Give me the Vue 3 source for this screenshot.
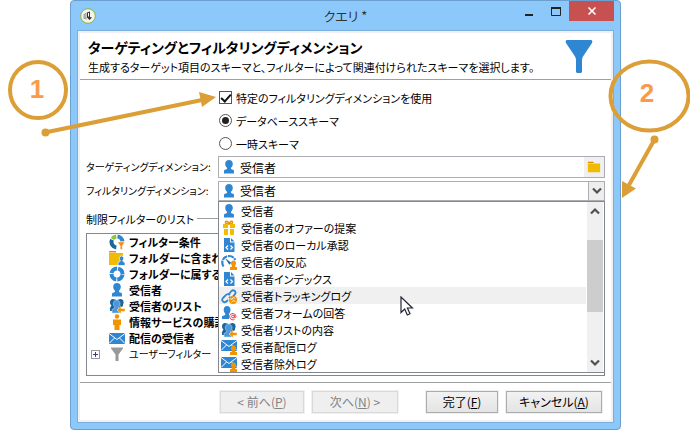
<script setup>
import { ref } from 'vue'

const useSpecific = ref(true)
const schema = ref('database')
const target = ref('受信者')
const filterDimension = ref('受信者')

const options = [
  { icon: 'person', label: '受信者' },
  { icon: 'gift', label: '受信者のオファーの提案' },
  { icon: 'code', label: '受信者のローカル承認' },
  { icon: 'gauge', label: '受信者の反応' },
  { icon: 'code', label: '受信者インデックス' },
  { icon: 'link', label: '受信者トラッキングログ', active: true },
  { icon: 'personat', label: '受信者フォームの回答' },
  { icon: 'group', label: '受信者リストの内容' },
  { icon: 'mailperson', label: '受信者配信ログ' },
  { icon: 'mailperson', label: '受信者除外ログ' },
]

const filters = [
  { icon: 'ringfilter', label: 'フィルター条件' },
  { icon: 'folderperson', label: 'フォルダーに含まれ' },
  { icon: 'ring', label: 'フォルダーに属する' },
  { icon: 'person', label: '受信者' },
  { icon: 'group', label: '受信者のリスト' },
  { icon: 'figure', label: '情報サービスの購読' },
  { icon: 'mail', label: '配信の受信者' },
  { icon: 'funnel', label: 'ユーザーフィルター', folder: true },
]
</script>

<template>
  <div class="page">
    <svg class="defs" width="0" height="0" aria-hidden="true">
      <symbol id="person" viewBox="0 0 16 16">
        <path fill="#2f86d2" d="M8 1C5.700 1 4.200 2.600 4.200 4.800c0 1.700.7 3 1.800 3.900v1.200L3.400 11C3 11.400 3 12 3 14.500h10c0-2.500 0-3.100-.4-3.500L10 9.900V8.700c1.100-.9 1.800-2.200 1.800-3.900C11.800 2.600 10.300 1 8 1z" />
      </symbol>
      <symbol id="gift" viewBox="0 0 16 16">
        <path fill="none" stroke="#ef8c00" stroke-width="1.500" d="M8 4C6 4 4 3.500 4.500 2S7.500 1.500 8 4c.5-2.500 3-3.500 3.500-2S10 4 8 4z" />
        <path fill="#f2bd00" d="M2 4h5v4H2zM9 4h5v4H9zM3 9h4v6H3zM9 9h4v6H9z" />
      </symbol>
      <symbol id="code" viewBox="0 0 16 16">
        <path fill="#2f86d2" d="M3 1h6v4.500h4.500V15H3z" />
        <path fill="#2f86d2" d="M10 1l3.500 3.500H10z" />
        <path fill="none" stroke="#fff" stroke-width="1.200" d="M7 8.500l-2 2 2 2M9.500 8.500l2 2-2 2" />
      </symbol>
      <symbol id="mini" viewBox="0 0 16 16">
        <path d="M12.500 6.500a2.700 2.700 0 0 0-1.500 4.900v1.100L9 13.300V16h7v-2.700l-2-.8v-1.100a2.700 2.700 0 0 0-1.500-4.900z" />
      </symbol>
      <symbol id="gauge" viewBox="0 0 16 16">
        <path fill="none" stroke="#2f86d2" stroke-width="2.200" stroke-dasharray="6 .8" d="M2.500 12.500C-.5 7.500 2.500 2 8 2c3 0 5 1.500 6.300 4" />
        <path fill="#1f69aa" d="M4 4l6.200 4.800-1.900 1.900z" />
        <use href="#mini" fill="#f29400" />
      </symbol>
      <symbol id="link" viewBox="0 0 16 16">
        <g fill="none" stroke="#2f86d2" stroke-width="1.800">
          <path d="M7.500 6.500l3-3.500c2-2 5.500 1 3.500 3.200L11.500 9c-1.200 1.100-2.600.8-3.500-.2" />
          <path d="M9 7C7.500 5.500 5.800 6 5 7l-3 3c-2.200 2.300 1 5.500 3.300 3.500L7 12" />
        </g>
        <circle cx="12" cy="12" r="4" fill="#f29400" />
        <path fill="none" stroke="#fff" stroke-width=".7" d="M9 10.500l2 1 1-2 2 1M10.500 14.500l1.500-2 2.500 1" />
      </symbol>
      <symbol id="personat" viewBox="0 0 16 16">
        <path fill="#2f86d2" d="M6 1C4 1 2.700 2.500 2.700 4.700c0 1.600.6 2.900 1.500 3.700v1.500L1 11.300V14h7V9l1-1.800c.3-.7.5-1.600.5-2.500C9.500 2.500 8 1 6 1z" />
        <circle cx="12" cy="11.500" r="1.400" fill="none" stroke="#e5414c" />
        <path fill="none" stroke="#e5414c" d="M13.400 10v2.500c.5 1 1.600 0 1.600-1.200a3.200 3.200 0 1 0-1.400 3" />
      </symbol>
      <symbol id="group" viewBox="0 0 16 16">
        <path fill="#1d659f" d="M4 1C2 1 1 2.500 1 4.200c0 1.500.6 2.500 1.400 3.200L1 10v3h5l4-2 4-3V6.800C15 5.500 15.200 1 11.500 1L8 2z" />
        <path fill="#4a98db" stroke="#d6e9f8" stroke-width=".5" d="M7.500 2.200c-2 0-3.200 1.500-3.200 3.300 0 1.600.7 2.700 1.600 3.500V10L3 11.500V15h9v-3.500L9.500 10V9c1-.8 1.500-2 1.500-3.500 0-1.800-1.500-3.300-3.500-3.300z" />
        <path fill="#f29400" stroke="#fff" stroke-width=".5" d="M8 12l4-3.700v2.200h4v3h-4v2.300z" />
      </symbol>
      <symbol id="mail" viewBox="0 0 16 16">
        <path fill="#2f86d2" d="M0 3h16v11H0z" />
        <path fill="none" stroke="#fff" d="M0 3.500l8 6 8-6M0 13.500L5.500 8M16 13.500L10.500 8" />
      </symbol>
      <symbol id="mailperson" viewBox="0 0 16 16">
        <path fill="#2f86d2" d="M0 1h16v11H0z" />
        <path fill="none" stroke="#fff" d="M0 1.500l8 6 8-6M0 11.500L5.500 6M16 11.500L10.500 6" />
        <use href="#mini" fill="#f29400" />
      </symbol>
      <symbol id="ring" viewBox="0 0 16 16">
        <circle cx="8" cy="8" r="5.500" fill="none" stroke="#2f86d2" stroke-width="4" stroke-dasharray="7.640 1" stroke-dashoffset="-.5" />
      </symbol>
      <symbol id="ringfilter" viewBox="0 0 16 16">
        <g fill="none" stroke-width="4">
          <path stroke="#1d659f" d="M7.300 13.500A5.500 5.500 0 0 1 3 5.800" />
          <path stroke="#8cc63f" d="M3.400 5A5.500 5.500 0 0 1 7.300 2.500" />
          <path stroke="#2f86d2" d="M8.500 2.500A5.500 5.500 0 0 1 13.500 7.500" />
        </g>
        <path fill="#f08a18" stroke="#fff" stroke-width=".5" d="M8.500 8H16l-2.700 3.700V16L11.200 15v-3.300z" />
      </symbol>
      <symbol id="folder" viewBox="0 0 16 16">
        <path fill="#e88b00" d="M1 2h6l1 1.500H1z" />
        <path fill="#f0bb00" d="M1 4h14v10H1z" />
      </symbol>
      <symbol id="folderperson" viewBox="0 0 16 16">
        <path fill="#e88b00" d="M0 1h7v1.500H0z" />
        <path fill="#f0bb00" d="M0 3h14v12H0z" />
        <path fill="#2f86d2" stroke="#fff" stroke-width=".7" d="M12.500 6a2.400 2.400 0 0 0-1.300 4.300v1L9 12.500V15.500h7v-3l-2.200-1.200v-1A2.400 2.400 0 0 0 12.500 6z" />
      </symbol>
      <symbol id="figure" viewBox="0 0 16 16">
        <circle cx="8" cy="2.500" r="2.200" fill="#f29400" />
        <path fill="#f29400" d="M4 5.500h8V11h-1.500v5h-5v-5H4z" />
      </symbol>
      <symbol id="funnel" viewBox="0 0 16 16">
        <path fill="#999" d="M2 1.500h12v1L9.500 8.500V15h-3V8.500L2 2.500z" />
      </symbol>
    </svg>

    <main class="window">
      <header class="titlebar">
        <svg class="app-icon" viewBox="0 0 16 16" aria-hidden="true">
          <circle cx="8" cy="8" r="7.300" fill="#f3f4ec" stroke="#8cb33d" />
          <path fill="#999" d="M3.500 6.500l3-2v7l-3-1z" />
          <path fill="#bbb" d="M4.500 7l1.500-1v4l-1.500-.5z" />
          <path fill="#333" d="M7 4.500l3-1V9l2 .5-2.500 2.500L7 9.500z" />
          <path fill="#fff" d="M8 5h1v3.500H8z" />
        </svg>
        <span class="caption">クエリ *</span>
        <div class="window-buttons">
          <button class="wb" type="button" aria-label="最小化"><svg width="10" height="12"><path d="M1 9h8v2H1z" fill="#222" /></svg></button>
          <button class="wb" type="button" aria-label="最大化"><svg width="10" height="12"><path d="M.5 4v6.500h9V4M0 3h10" fill="none" stroke="#222" /><path d="M0 2h10v2H0z" fill="#222" /></svg></button>
          <button class="wb close" type="button" aria-label="閉じる"><svg width="10" height="10"><path d="M1.500 1.500l7 7M8.500 1.500l-7 7" stroke="#fff" stroke-width="1.600" /></svg></button>
        </div>
      </header>

      <div class="client">
        <div class="heading">
          <div>
            <h1>ターゲティングとフィルタリングディメンション</h1>
            <p>生成するターゲット項目のスキーマと、フィルターによって関連付けられたスキーマを選択します。</p>
          </div>
          <svg class="big-funnel" viewBox="0 0 28 33" aria-hidden="true"><path fill="#2f86d2" d="M1.500 0h25Q28 1 27 3L18 16.500Q17 18 17 20v12l-1 1h-4l-1-1V20q0-2-1-3.500L1 3Q0 1 1.500 0z" /></svg>
        </div>

        <form class="form" @submit.prevent>
          <div class="choices">
            <label class="choice"><input v-model="useSpecific" type="checkbox" />特定のフィルタリングディメンションを使用</label>
            <label class="choice"><input v-model="schema" type="radio" name="schema" value="database" />データベーススキーマ</label>
            <label class="choice"><input v-model="schema" type="radio" name="schema" value="temp" />一時スキーマ</label>
          </div>

          <div class="row">
            <label for="target">ターゲティングディメンション:</label>
            <div class="field target">
              <svg class="icon"><use href="#person" /></svg>
              <input id="target" v-model="target" type="text" />
              <button type="button" class="browse" aria-label="参照"><svg><use href="#folder" /></svg></button>
            </div>
          </div>

          <div class="row">
            <label for="filter">フィルタリングディメンション:</label>
            <div class="field combo">
              <svg class="icon"><use href="#person" /></svg>
              <select id="filter" v-model="filterDimension">
                <option v-for="o in options" :key="o.label">{{ o.label }}</option>
              </select>
              <span class="drop"><svg width="10" height="8"><path d="M1 1.500l4 4 4-4" fill="none" stroke="#505050" stroke-width="2.200" /></svg></span>
              <div class="popup">
                <ul role="listbox" aria-label="フィルタリングディメンション">
                  <li v-for="o in options" :key="o.label" role="option" :aria-selected="!!o.active" :class="{ active: o.active }">
                    <svg class="icon"><use :href="'#' + o.icon" /></svg>{{ o.label }}
                  </li>
                </ul>
                <div class="scrollbar">
                  <svg width="10" height="8"><path d="M1 6.500l4-4 4 4" fill="none" stroke="#505050" stroke-width="2.200" /></svg>
                  <div class="track"><div class="thumb"></div></div>
                  <svg width="10" height="8"><path d="M1 1.500l4 4 4-4" fill="none" stroke="#505050" stroke-width="2.200" /></svg>
                </div>
                <svg class="cursor" width="14" height="21" aria-hidden="true"><path d="M1 1v15.500l3.700-3.500 2.600 6 2.700-1.200-2.600-5.800h5z" fill="#fff" stroke="#222433" stroke-width="1.200" /></svg>
              </div>
            </div>
          </div>

          <h2>制限フィルターのリスト</h2>
          <ul class="tree">
            <li v-for="f in filters" :key="f.label" :class="{ folder: f.folder }">
              <button v-if="f.folder" type="button" class="expander" aria-label="展開"><svg width="9" height="9"><path d="M2 4.500h5M4.500 2v5" stroke="#2b3f8c" /></svg></button>
              <svg class="icon"><use :href="'#' + f.icon" /></svg>{{ f.label }}
            </li>
          </ul>
        </form>

        <footer class="actions">
          <button type="button" disabled class="prev">&lt; 前へ(<u>P</u>)</button>
          <button type="button" disabled class="next">次へ(<u>N</u>) &gt;</button>
          <button type="button" class="finish">完了(<u>F</u>)</button>
          <button type="button" class="cancel">キャンセル(<u>A</u>)</button>
        </footer>
      </div>
    </main>

    <svg class="callout left" width="220" height="150">
      <g stroke="#dc9e36" fill="none" stroke-width="4">
        <circle cx="38" cy="90" r="28" />
        <path d="M45 132.500L202 100" />
      </g>
      <path fill="#dc9e36" d="M216 97l-17-5 3 15z" />
      <circle cx="45.500" cy="132.500" r="4" fill="#dc9e36" />
      <text x="37" y="98" text-anchor="middle">1</text>
    </svg>
    <svg class="callout right" width="90" height="210">
      <g stroke="#dc9e36" fill="none" stroke-width="4">
        <ellipse cx="49.500" cy="96" rx="39" ry="34.500" />
        <path d="M54.500 139.500L29 185" />
      </g>
      <path fill="#dc9e36" d="M22 198V181l14 7.500z" />
      <circle cx="54.500" cy="139.500" r="4" fill="#dc9e36" />
      <text x="47" y="102" text-anchor="middle">2</text>
    </svg>
  </div>
</template>

<style>
body {
  margin: 0;
  background: #fff;
}
</style>

<style scoped>
* {
  box-sizing: border-box;
}
.page {
  position: relative;
  padding: 0 69px 12px 70px;
  font: 11px/16px "Noto Sans CJK JP", sans-serif;
  font-feature-settings: "palt";
  color: #000;
}
button,
input,
select {
  font: inherit;
  font-size: 12px;
  font-feature-settings: inherit;
  color: inherit;
  margin: 0;
  padding: 0;
  border: 0;
  background: none;
}
h1,
h2,
p,
ul {
  margin: 0;
  padding: 0;
  list-style: none;
}
.defs {
  position: absolute;
}
.window {
  background: #8dc8fb;
  border: 1px solid #6b9fd0;
  border-radius: 4px;
  padding: 0 6px 6px;
}
.titlebar {
  display: grid;
  grid-template-columns: 1fr auto 1fr;
  height: 29px;
  align-items: center;
}
.app-icon {
  width: 16px;
  height: 16px;
  margin-left: 3px;
}
.caption {
  font-size: 13px;
  color: #333;
}
.window-buttons {
  display: flex;
  justify-content: flex-end;
  align-self: start;
}
.wb {
  display: flex;
  align-items: center;
  justify-content: center;
  width: 27px;
  height: 20px;
}
.close {
  width: 45px;
  background: #c75050;
}
.client {
  border: 1px solid #79aedd;
  background: #fff;
  outline: 2px solid #f0f0f0;
  outline-offset: -3px;
  padding: 2px;
}
.heading {
  display: flex;
  justify-content: space-between;
  height: 47px;
  padding: 4px 18px 0 8px;
  border-bottom: 1px solid #a0a0a0;
  white-space: nowrap;
}
h1 {
  font-size: 14px;
  line-height: 20px;
}
.heading p {
  line-height: 20px;
}
.big-funnel {
  flex: none;
  width: 28px;
  height: 33px;
  margin-top: 3px;
}
.form {
  padding: 6px;
}
.choices {
  padding: 0 0 1px 133px;
}
.choice {
  display: flex;
  align-items: center;
  gap: 4px;
  height: 23px;
}
.choice input {
  appearance: none;
  width: 13px;
  height: 13px;
  border: 1px solid #555;
  background: #fff;
  display: grid;
  place-items: center;
}
.choice input[type="radio"] {
  border-radius: 50%;
}
.choice input[type="radio"]:checked::before {
  content: "";
  width: 7px;
  height: 7px;
  border-radius: 50%;
  background: #222;
}
.choice input[type="checkbox"]:checked::before {
  content: "";
  width: 8px;
  height: 4px;
  border: solid #111;
  border-width: 0 0 2px 2px;
  transform: translateY(-1px) rotate(-48deg);
}
.row {
  display: grid;
  grid-template-columns: 132px 1fr;
  align-items: center;
  padding-bottom: 3px;
  white-space: nowrap;
}
.row label {
  font-size: 10px;
}
.field {
  position: relative;
  display: flex;
  align-items: center;
  height: 22px;
  border: 1px solid #abadb3;
  padding-left: 2px;
}
.icon {
  width: 16px;
  height: 16px;
  flex: none;
}
.field input {
  flex: 1;
  min-width: 0;
  height: 18px;
  padding-left: 3px;
}
.browse {
  display: flex;
  align-items: center;
  justify-content: center;
  width: 20px;
  align-self: stretch;
  background: #f0f0f0;
}
.browse svg {
  width: 14px;
  height: 14px;
}
.row .combo {
  height: 20px;
}
.combo select {
  appearance: none;
  flex: 1;
  height: 18px;
  padding-left: 3px;
}
.drop {
  display: flex;
  align-items: center;
  justify-content: center;
  width: 16px;
  align-self: stretch;
  border-left: 1px solid #abadb3;
  background: #eee;
}
.popup {
  position: absolute;
  top: 19px;
  left: -1px;
  right: -1px;
  display: flex;
  border: 1px solid #828790;
  background: #fff;
}
.popup ul {
  flex: 1;
}
.popup li {
  display: flex;
  align-items: center;
  gap: 4px;
  height: 17px;
  padding-left: 2px;
}
.popup .active {
  background: #f0f0f0;
}
.scrollbar {
  display: flex;
  flex-direction: column;
  align-items: center;
  width: 16px;
  margin: 0 1px;
  padding: 5px 0;
  background: #f0f0f0;
}
.track {
  flex: 1;
  align-self: stretch;
  padding-top: 25px;
}
.thumb {
  height: 72px;
  background: #cdcdcd;
}
.cursor {
  position: absolute;
  left: 181px;
  top: 94px;
}
h2 {
  display: flex;
  align-items: center;
  gap: 3px;
  height: 29px;
  font-size: 11px;
  font-weight: normal;
}
h2::after {
  content: "";
  flex: 1;
  border-top: 1px solid #a0a0a0;
}
.tree {
  border: 1px solid #828790;
  height: 143px;
  overflow: hidden;
}
.tree li {
  display: flex;
  align-items: center;
  gap: 4px;
  height: 16px;
  padding-left: 22px;
  font-weight: bold;
  white-space: nowrap;
}
.tree .folder {
  padding-left: 4px;
  font-size: 10px;
  font-weight: normal;
}
.expander {
  display: grid;
  width: 9px;
  height: 9px;
  margin-right: 5px;
  outline: 1px solid #999;
  outline-offset: -1px;
}
.actions {
  display: flex;
  gap: 8px;
  justify-content: flex-end;
  border-top: 1px solid #a0a0a0;
  padding: 8px 9px 7px;
}
.actions button {
  height: 22px;
  line-height: 18px;
  border: 1px solid #acacac;
  background: linear-gradient(#f2f2f2, #e4e4e4);
  outline: 1px solid #f0f0f0;
}
.actions button:disabled {
  border-color: #d9d9d9;
  background: #efefef;
  color: #838383;
}
.prev {
  width: 84px;
}
.next {
  width: 86px;
  margin-right: 20px;
}
.finish {
  width: 72px;
}
.cancel {
  width: 96px;
}
.callout {
  position: absolute;
  top: 0;
  pointer-events: none;
}
.left {
  left: 0;
}
.right {
  right: 0;
}
.callout text {
  font: bold 26px "Liberation Sans", Arial, sans-serif;
  fill: #fb9a4b;
}
</style>
